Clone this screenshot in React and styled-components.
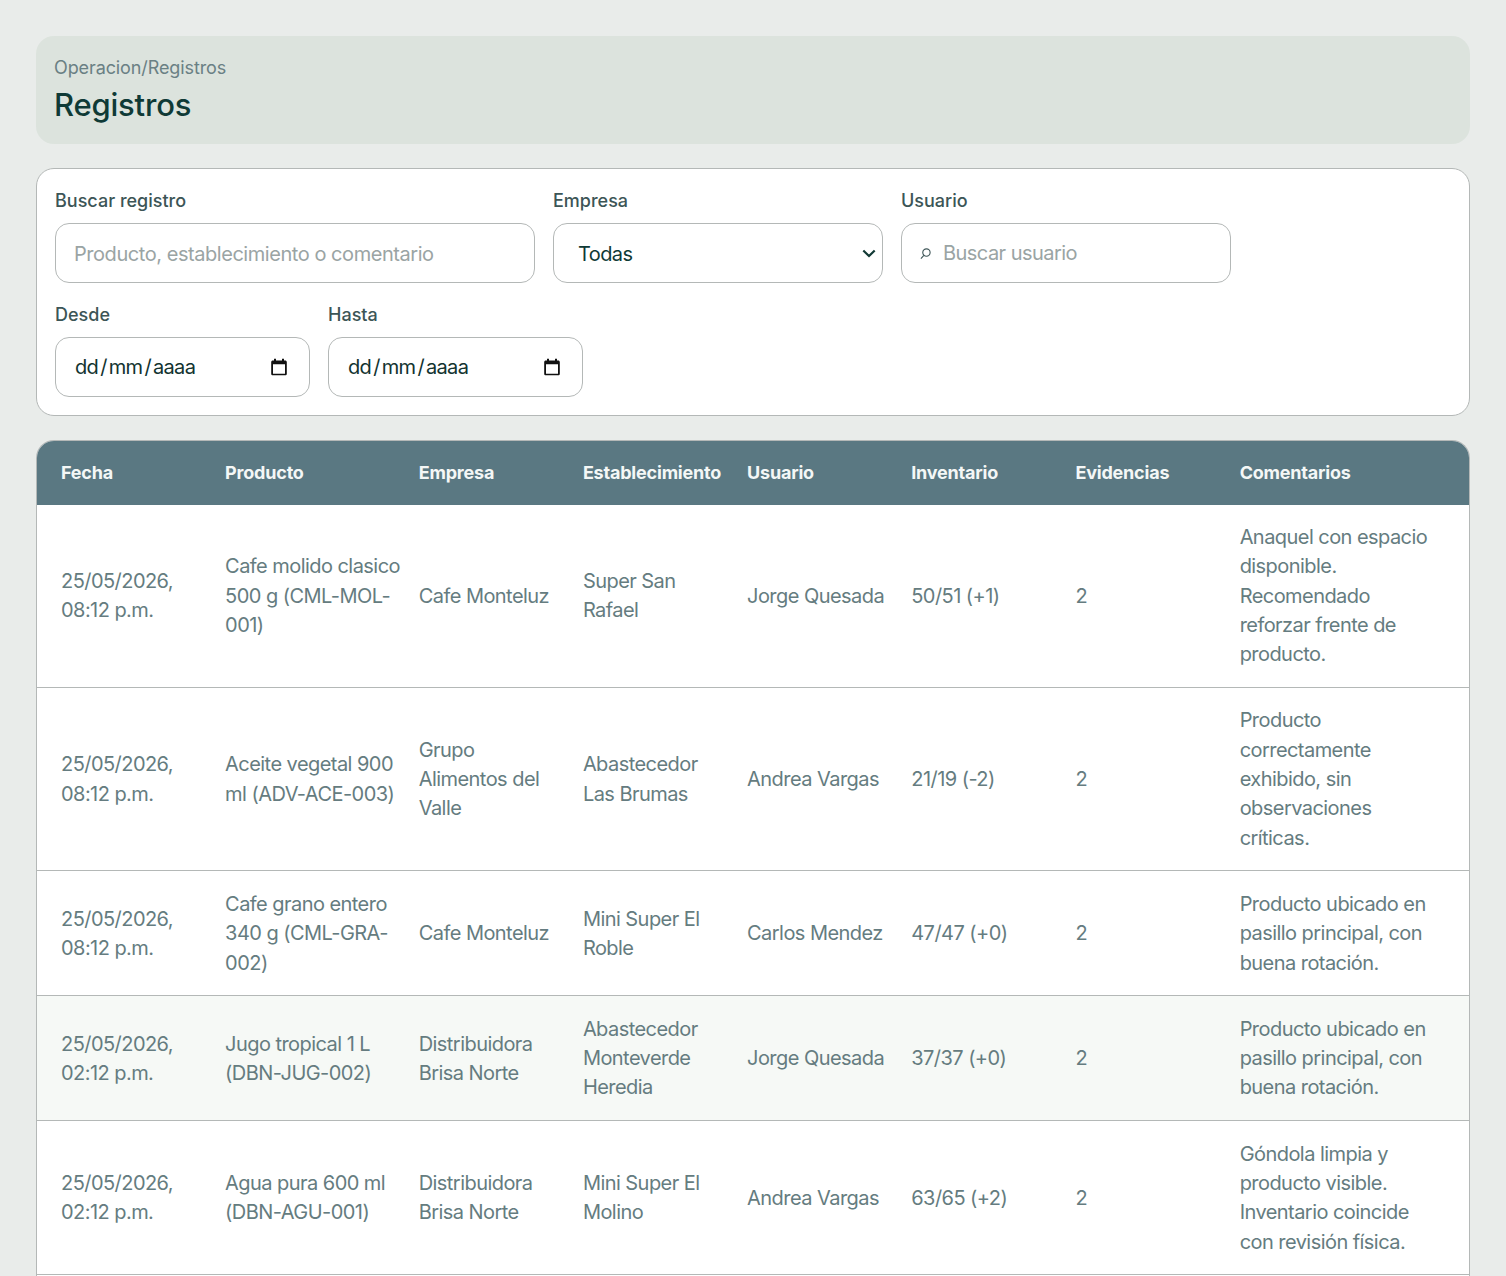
import React from "react";
import styled, { createGlobalStyle } from "styled-components";

const rows = [
  {
    date: ["25/05/2026,", "08:12 p.m."],
    product: "Cafe molido clasico 500 g (CML-MOL-001)",
    company: "Cafe Monteluz",
    place: "Super San Rafael",
    user: "Jorge Quesada",
    stock: "50/51 (+1)",
    comment: "Anaquel con espacio disponible. Recomendado reforzar frente de producto.",
  },
  {
    date: ["25/05/2026,", "08:12 p.m."],
    product: "Aceite vegetal 900 ml (ADV-ACE-003)",
    company: "Grupo Alimentos del Valle",
    place: "Abastecedor Las Brumas",
    user: "Andrea Vargas",
    stock: "21/19 (-2)",
    comment: "Producto correctamente exhibido, sin observaciones críticas.",
  },
  {
    date: ["25/05/2026,", "08:12 p.m."],
    product: "Cafe grano entero 340 g (CML-GRA-002)",
    company: "Cafe Monteluz",
    place: "Mini Super El Roble",
    user: "Carlos Mendez",
    stock: "47/47 (+0)",
    comment: "Producto ubicado en pasillo principal, con buena rotación.",
  },
  {
    date: ["25/05/2026,", "02:12 p.m."],
    product: "Jugo tropical 1 L (DBN-JUG-002)",
    company: "Distribuidora Brisa Norte",
    place: "Abastecedor Monteverde Heredia",
    user: "Jorge Quesada",
    stock: "37/37 (+0)",
    comment: "Producto ubicado en pasillo principal, con buena rotación.",
    tinted: true,
  },
  {
    date: ["25/05/2026,", "02:12 p.m."],
    product: "Agua pura 600 ml (DBN-AGU-001)",
    company: "Distribuidora Brisa Norte",
    place: "Mini Super El Molino",
    user: "Andrea Vargas",
    stock: "63/65 (+2)",
    comment: "Góndola limpia y producto visible. Inventario coincide con revisión física.",
  },
];

const columns = [
  ["Fecha", 164.1],
  ["Producto", 193.6],
  ["Empresa", 164.2],
  ["Establecimiento", 164.2],
  ["Usuario", 164.2],
  ["Inventario", 164.2],
  ["Evidencias", 164.2],
  ["Comentarios", 253.3],
];

const CalendarIcon = () => (
  <svg width="18" height="18" viewBox="0 0 18 18" aria-hidden="true">
    <path
      fill="#111"
      d="M4 .8h2v1.7h6V.8h2v1.7h1.2c.9 0 1.6.7 1.6 1.6v11.600c0 .9-.7 1.600-1.600 1.600H2.800c-.9 0-1.600-.7-1.600-1.600V4.100c0-.9.7-1.600 1.600-1.600H4V.8zM3 6.300v9.400h12V6.300H3z"
    />
  </svg>
);

const SearchIcon = () => (
  <svg width="12" height="14" viewBox="0 0 12 14" fill="none" stroke="#3f5658" strokeWidth="1.2" aria-hidden="true">
    <circle cx="7" cy="6.500" r="4" />
    <path d="M4.200 9.500 1 13" />
  </svg>
);

const App = () => (
  <>
    <GlobalStyle />
    <Page>
      <Header>
        <Breadcrumb>Operacion/Registros</Breadcrumb>
        <Title>Registros</Title>
      </Header>

      <Filters>
        <FilterRow>
          <Field $width={480}>
            <Label>Buscar registro</Label>
            <TextInput placeholder="Producto, establecimiento o comentario" />
          </Field>
          <Field $width={330}>
            <Label>Empresa</Label>
            <Select defaultValue="todas">
              <option value="todas">Todas</option>
            </Select>
          </Field>
          <Field $width={330}>
            <Label>Usuario</Label>
            <InputBox>
              <SearchIcon />
              <BareInput placeholder="Buscar usuario" />
            </InputBox>
          </Field>
        </FilterRow>
        <FilterRow>
          <Field $width={255}>
            <Label>Desde</Label>
            <DateBox>
              <DateText>dd / mm / aaaa</DateText>
              <CalendarIcon />
            </DateBox>
          </Field>
          <Field $width={255}>
            <Label>Hasta</Label>
            <DateBox>
              <DateText>dd / mm / aaaa</DateText>
              <CalendarIcon />
            </DateBox>
          </Field>
        </FilterRow>
      </Filters>

      <TableCard>
        <Table>
          <colgroup>
            {columns.map(([name, width]) => (
              <col key={name} style={{ width }} />
            ))}
          </colgroup>
          <thead>
            <tr>
              {columns.map(([name]) => (
                <HeadCell key={name}>{name}</HeadCell>
              ))}
            </tr>
          </thead>
          <tbody>
            {rows.map((row, i) => (
              <Row key={i} $tinted={row.tinted}>
                <Cell>
                  {row.date[0]}
                  <br />
                  {row.date[1]}
                </Cell>
                <Cell>
                  <ProductText>{row.product}</ProductText>
                </Cell>
                <Cell>{row.company}</Cell>
                <Cell>{row.place}</Cell>
                <Cell>{row.user}</Cell>
                <Cell>{row.stock}</Cell>
                <Cell>2</Cell>
                <Cell>{row.comment}</Cell>
              </Row>
            ))}
          </tbody>
        </Table>
      </TableCard>
    </Page>
  </>
);

const GlobalStyle = createGlobalStyle`
  * {
    box-sizing: border-box;
  }

  html,
  body {
    margin: 0;
    height: 100%;
    overflow: hidden;
    background: #e9ecea;
  }

  body {
    font-family: Inter, "Noto Sans", "Liberation Sans", sans-serif;
  }
`;

const Page = styled.div`
  display: flex;
  flex-direction: column;
  gap: 24px;
  height: 1276px;
  padding: 36px 36px 0;
  overflow: hidden;
`;

const Header = styled.header`
  flex: none;
  height: 108px;
  padding: 18px 18px 0;
  background: #dce3dd;
  border-radius: 18px;
`;

const Breadcrumb = styled.div`
  font-size: 18px;
  line-height: 27px;
  letter-spacing: -0.1px;
  color: #6a8084;
`;

const Title = styled.h1`
  margin: 4px 0 0;
  font-size: 31px;
  line-height: 39px;
  font-weight: 500;
  letter-spacing: -0.2px;
  color: #0f3a36;
`;

const Filters = styled.section`
  flex: none;
  display: flex;
  flex-direction: column;
  gap: 18px;
  height: 248px;
  padding: 18px;
  background: #fff;
  border: 1px solid #b4b8b7;
  border-radius: 18px;
`;

const FilterRow = styled.div`
  display: flex;
  gap: 18px;
`;

const Field = styled.label`
  display: flex;
  flex-direction: column;
  gap: 8px;
  width: ${(p) => p.$width}px;
`;

const Label = styled.span`
  font-size: 18px;
  line-height: 28px;
  font-weight: 500;
  letter-spacing: 0;
  color: #3c5556;
`;

const TextInput = styled.input`
  width: 100%;
  height: 60px;
  padding: 1px 18px 0;
  font: inherit;
  font-size: 20px;
  letter-spacing: -0.45px;
  color: #0f3a36;
  background: #fff;
  border: 1px solid #b4b8b7;
  border-radius: 14px;
  outline: none;

  &::placeholder {
    color: #9aa4a4;
    opacity: 1;
  }
`;

const Select = styled.select`
  width: 100%;
  height: 60px;
  padding: 1px 24px 0;
  font: inherit;
  font-size: 20px;
  letter-spacing: -0.6px;
  color: #0f3a36;
  border: 1px solid #b4b8b7;
  border-radius: 14px;
  outline: none;
  appearance: none;
  background: #fff
    url("data:image/svg+xml,%3Csvg xmlns='http://www.w3.org/2000/svg' width='14' height='9' viewBox='0 0 14 9' fill='none' stroke='%23123a35' stroke-width='2.2'%3E%3Cpath d='M1.300 1.500 7 7l5.700-5.500'/%3E%3C/svg%3E")
    no-repeat right 6px center;
`;

const InputBox = styled.div`
  display: flex;
  align-items: center;
  gap: 12px;
  height: 60px;
  padding: 0 18px;
  border: 1px solid #b4b8b7;
  border-radius: 14px;
`;

const BareInput = styled(TextInput)`
  height: auto;
  padding: 0;
  border: none;
  border-radius: 0;
  min-width: 0;
  letter-spacing: -0.55px;
`;

const DateBox = styled.div`
  display: flex;
  align-items: center;
  justify-content: space-between;
  height: 60px;
  padding: 0 21px 0 19px;
  border: 1px solid #b4b8b7;
  border-radius: 14px;
`;

const DateText = styled.span`
  font-size: 20px;
  word-spacing: -3px;
  letter-spacing: -0.65px;
  color: #12332f;
`;

const TableCard = styled.section`
  flex: 1;
  min-height: 0;
  overflow: hidden;
  background: #fff;
  border: 1px solid #b4b8b7;
  border-bottom: none;
  border-radius: 18px 18px 0 0;
`;

const Table = styled.table`
  width: 100%;
  table-layout: fixed;
  border-collapse: collapse;
`;

const HeadCell = styled.th`
  height: 63.500px;
  padding: 0 0 0 24px;
  font-size: 18px;
  font-weight: 700;
  letter-spacing: -0.2px;
  text-align: left;
  white-space: nowrap;
  color: #f4f7f6;
  background: #5a7882;
`;

const Row = styled.tr`
  background: ${(p) => (p.$tinted ? "#f6f9f6" : "#fff")};
  border-bottom: 1px solid #b4b8b7;
`;

const Cell = styled.td`
  padding: 18.500px 0 17.500px 24px;
  font-size: 20px;
  line-height: 29.300px;
  letter-spacing: -0.55px;
  color: #657c80;
  vertical-align: middle;

  &:last-child {
    padding-right: 24px;
  }
`;

const ProductText = styled.div`
  margin-right: -10px;
`;

export default App;
